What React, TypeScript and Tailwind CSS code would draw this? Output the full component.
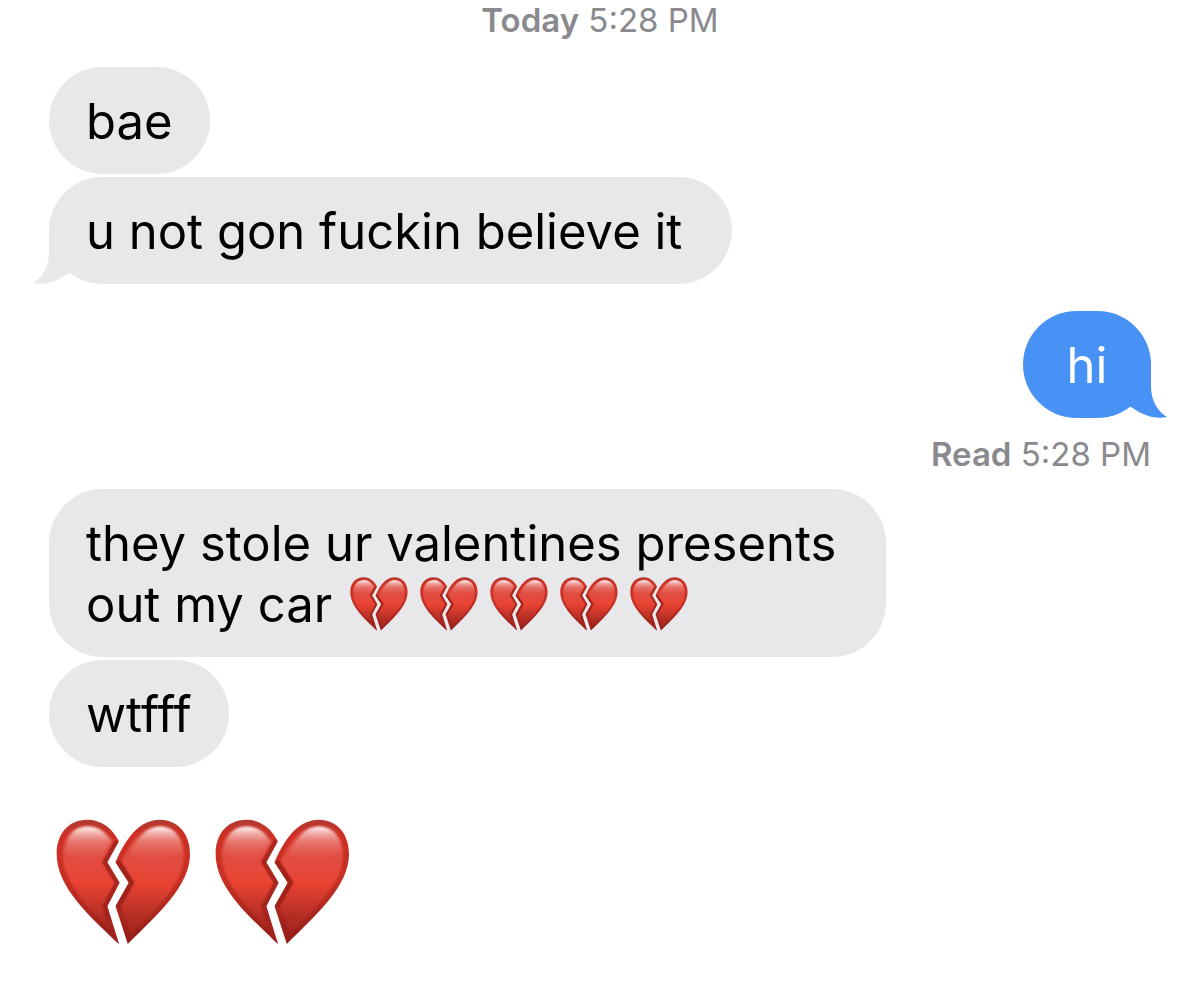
import { useId } from 'react'
import type { ReactNode } from 'react'
import clsx from 'clsx'

function BrokenHeart({ className }: { className?: string }) {
  const id = useId()
  const left =
    'M238 122 C216 80 184 57 142 57 C84 57 50 102 50 160 C50 262 152 350 238 432 L203 318 L240 247 L203 185 Z'
  const right =
    'M228 185 C262 106 304 57 362 57 C418 57 453 102 453 160 C453 256 358 340 265 432 L228 318 L268 247 Z'

  return (
    <svg viewBox="48 56 408 378" className={className} role="img" aria-label="broken heart">
      <defs>
        <linearGradient id={`${id}-rim`} x1="0" y1="56" x2="0" y2="434" gradientUnits="userSpaceOnUse">
          <stop offset="0" stopColor="#b03a32" />
          <stop offset="0.12" stopColor="#cf2f23" />
          <stop offset="0.5" stopColor="#c53025" />
          <stop offset="1" stopColor="#8f1d17" />
        </linearGradient>
        <linearGradient id={`${id}-body`} x1="0" y1="76" x2="0" y2="420" gradientUnits="userSpaceOnUse">
          <stop offset="0" stopColor="#dc5549" />
          <stop offset="0.35" stopColor="#e34a3e" />
          <stop offset="0.5" stopColor="#e94331" />
          <stop offset="0.66" stopColor="#cc382c" />
          <stop offset="0.8" stopColor="#b22d24" />
          <stop offset="1" stopColor="#a0231b" />
        </linearGradient>
        <linearGradient id={`${id}-shine`} x1="0" y1="76" x2="0" y2="180" gradientUnits="userSpaceOnUse">
          <stop offset="0" stopColor="#fff" stopOpacity="1" />
          <stop offset="0.2" stopColor="#fbdcd9" stopOpacity="0.7" />
          <stop offset="0.5" stopColor="#f0a09a" stopOpacity="0.4" />
          <stop offset="1" stopColor="#ef8078" stopOpacity="0" />
        </linearGradient>
        <filter id={`${id}-soft`} x="-10%" y="-10%" width="120%" height="120%">
          <feGaussianBlur stdDeviation="3" />
        </filter>
        <clipPath id={`${id}-clip`}>
          <path d={left} />
          <path d={right} />
        </clipPath>
      </defs>
      <path d={left} fill={`url(#${id}-rim)`} />
      <path d={right} fill={`url(#${id}-rim)`} />
      <g clipPath={`url(#${id}-clip)`}>
        <g filter={`url(#${id}-soft)`}>
          <path
            d="M222 124 C202 92 176 75 142 75 C96 75 68 110 68 160 C68 240 130 306 212 394 L186 318 L226 247 L186 185 Z"
            fill={`url(#${id}-body)`}
          />
          <path
            d="M246 182 C280 112 314 75 362 75 C408 75 435 110 435 160 C435 244 366 314 276 402 L244 318 L286 247 Z"
            fill={`url(#${id}-body)`}
          />
          <path
            d="M214 122 C194 90 172 78 144 78 C104 78 80 106 76 152 C110 180 164 180 192 160 Z"
            fill={`url(#${id}-shine)`}
          />
          <path
            d="M270 160 C298 106 326 78 362 78 C402 78 426 106 430 152 C390 182 318 182 270 160 Z"
            fill={`url(#${id}-shine)`}
          />
        </g>
        <path
          d="M238 124 L203 185 L240 247 L203 318 L238 432"
          fill="none"
          stroke="#a3261d"
          strokeOpacity="0.85"
          strokeWidth="26"
        />
        <path d="M228 185 L268 247 L228 318" fill="none" stroke="#9c2119" strokeOpacity="0.85" strokeWidth="28" />
      </g>
    </svg>
  )
}

interface BubbleProps {
  children: ReactNode
  sent?: boolean
  tail?: boolean
  wide?: boolean
}

function Bubble({ children, sent, tail, wide }: BubbleProps) {
  return (
    <div
      className={clsx(
        'relative flex min-w-32 max-w-[860px] justify-center rounded-[54px] pt-6 pb-[22px] pl-[37px] text-[49px] leading-[61px]',
        wide ? 'pr-[50px]' : 'pr-[37px]',
        sent ? 'self-end bg-[#4892f5] text-white' : 'self-start bg-[#e8e8ea] text-black'
      )}
    >
      {tail && (
        <svg
          viewBox="0 0 50 58"
          aria-hidden="true"
          className={clsx(
            'absolute bottom-0 h-[58px] w-[50px]',
            sent ? '-right-4 -scale-x-100 fill-[#4892f5]' : '-left-4 fill-[#e8e8ea]'
          )}
        >
          <path d="M16 0 V26 C16 40 10 51 0 57 C13 60 26 54 36 47 L50 40 V0 Z" />
        </svg>
      )}
      <p className="relative">{children}</p>
    </div>
  )
}

export default function App() {
  return (
    <main className="min-h-screen bg-white pb-12 font-['Inter',sans-serif]">
      <p className="text-center text-[33px] leading-10 text-[#8a8a8e]">
        <span className="font-semibold">Today</span> 5:28 PM
      </p>

      <section className="mt-[27px] flex flex-col px-[49px]">
        <div className="flex flex-col gap-[3px]">
          <Bubble>bae</Bubble>
          <Bubble tail wide>
            u not gon fuckin believe it
          </Bubble>
        </div>

        <div className="mt-[27px] flex flex-col">
          <Bubble sent tail>
            hi
          </Bubble>
          <p className="mt-4 text-right text-[33px] leading-10 text-[#8a8a8e]">
            <span className="font-semibold">Read</span> 5:28 PM
          </p>
        </div>

        <div className="mt-[15px] flex flex-col gap-[3px]">
          <Bubble wide>
            they stole ur valentines presents
            <br />
            out my car{' '}
            <span className="ml-1 inline-flex gap-3 align-[-9px]">
              {[0, 1, 2, 3, 4].map((n) => (
                <BrokenHeart key={n} className="h-[54px] w-[58px]" />
              ))}
            </span>
          </Bubble>
          <Bubble>wtfff</Bubble>
        </div>

        <div className="mt-[52px] flex gap-6 px-[7px]">
          <BrokenHeart className="h-[126px] w-[135px]" />
          <BrokenHeart className="h-[126px] w-[135px]" />
        </div>
      </section>
    </main>
  )
}
